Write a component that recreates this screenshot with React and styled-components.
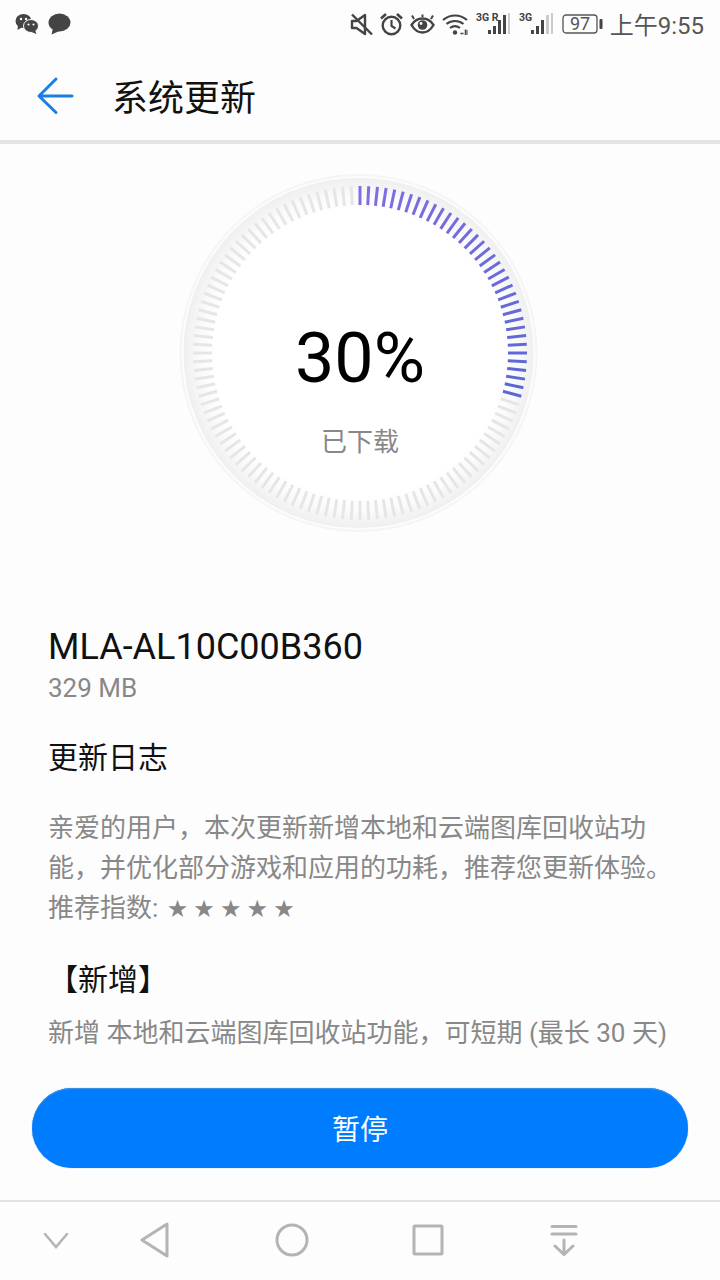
import React from 'react'
import styled, { createGlobalStyle } from 'styled-components'

const GlobalStyle = createGlobalStyle`
  html, body { margin: 0; padding: 0; background: #fdfdfd; }
  * { box-sizing: border-box; }
  body { font-family: Roboto, "Noto Sans CJK SC", sans-serif; }
`

const Page = styled.div`
  width: 720px;
  height: 1280px;
  display: flex;
  flex-direction: column;
  background: #fdfdfd;
  overflow: hidden;
`

const StatusBar = styled.div`
  height: 50px;
  flex: none;
  display: flex;
  align-items: center;
  padding: 0 16px 2px 15px;
  color: #444;
`

const StatusLeft = styled.div`
  display: flex;
  align-items: center;
  gap: 8px;
`

const StatusRight = styled.div`
  margin-left: auto;
  display: flex;
  align-items: center;
  gap: 7px;
`

const Clock = styled.span`
  font-size: 24px;
  color: #555;
  margin-top: -2px;
`

const Header = styled.header`
  height: 94px;
  flex: none;
  display: flex;
  align-items: center;
  padding-left: 36px;
  border-bottom: 4px solid #e4e4e4;
`

const HeaderTitle = styled.h1`
  margin: 0 0 0 36px;
  font-size: 36px;
  font-weight: 400;
  color: #111;
`

const Main = styled.main`
  flex: 1;
  min-height: 0;
  overflow: hidden;
  display: flex;
  flex-direction: column;
`

const RingWrap = styled.div`
  position: relative;
  width: 380px;
  height: 380px;
  margin: 19px auto 0;
  flex: none;
`

const RingCenter = styled.div`
  position: absolute;
  inset: 0;
  display: flex;
  flex-direction: column;
  align-items: center;
`

const Percent = styled.div`
  margin-top: 153px;
  font-size: 70px;
  line-height: 84px;
  color: #000;
`

const RingLabel = styled.div`
  margin-top: 25px;
  font-size: 26px;
  line-height: 34px;
  color: #888;
`

const Details = styled.section`
  margin-top: 83px;
  padding: 0 48px;
`

const Version = styled.div`
  font-size: 36px;
  line-height: 42px;
  color: #111;
`

const Size = styled.div`
  font-size: 26px;
  line-height: 32px;
  margin-top: 4px;
  color: #888;
`

const LogTitle = styled.div`
  font-size: 30px;
  line-height: 40px;
  margin-top: 34px;
  color: #111;
`

const Paragraph = styled.p`
  margin: ${p => p.$top}px 0 0;
  font-size: 26px;
  line-height: 40px;
  color: #888;
  white-space: nowrap;
`

const Stars = styled.span`
  font-family: "DejaVu Sans", sans-serif;
  font-size: 24px;
  line-height: 26px;
  letter-spacing: 5.100px;
  margin-left: 2px;
`

const SectionTitle = styled.div`
  margin-top: 32px;
  font-size: 30px;
  line-height: 40px;
  color: #111;
`

const ButtonBar = styled.div`
  height: 112px;
  flex: none;
  padding: 0 32px;
  display: flex;
  align-items: flex-start;
`

const PauseButton = styled.button`
  width: 656px;
  height: 80px;
  border: none;
  border-radius: 40px;
  background: #007dff;
  box-shadow: inset 0 1px 0 #3f8fe0, 0 0 1px #3f8fe0;
  color: #fff;
  font-family: inherit;
  font-size: 28px;
  padding: 0;
`

const NavBar = styled.nav`
  height: 80px;
  flex: none;
  display: flex;
  align-items: center;
  padding: 0 0 2px 36px;
  border-top: 2px solid #e3e3e3;
`

const NavIcon = styled.div`
  width: 40px;
  height: 40px;
  margin-left: ${p => p.$gap}px;
  display: flex;
  align-items: center;
  justify-content: center;
  color: #b4b4b4;
`

const Wechat = () => (
  <svg width="24" height="22" viewBox="0 0 24 22" fill="#444">
    <ellipse cx="8.500" cy="8" rx="8" ry="7" />
    <path d="M3 12l-.5 5 5-3z" />
    <ellipse cx="16" cy="13" rx="7.500" ry="6.500" stroke="#fdfdfd" strokeWidth="1" />
    <path d="M20 17l1.500 4-5-2z" />
    <circle cx="6" cy="6" r="1.200" fill="#fdfdfd" />
    <circle cx="11" cy="6" r="1.200" fill="#fdfdfd" />
    <circle cx="13.500" cy="11.500" r="1.100" fill="#fdfdfd" />
    <circle cx="18.500" cy="11.500" r="1.100" fill="#fdfdfd" />
  </svg>
)

const Bubble = () => (
  <svg width="24" height="22" viewBox="0 0 24 22" fill="#444">
    <ellipse cx="12.500" cy="9.500" rx="11" ry="9" />
    <path d="M6 15l-1.500 6.500 8-3.500z" />
  </svg>
)

const Mute = () => (
  <svg width="23" height="24" viewBox="0 0 23 24" fill="none" stroke="#444" strokeWidth="2.400" strokeLinejoin="round">
    <path d="M2 9h4.500L15 3v19l-8.500-6H2z" />
    <path d="M2 2.500l20 20" />
  </svg>
)

const Alarm = () => (
  <svg width="23" height="24" viewBox="0 0 23 24" fill="none" stroke="#444" strokeWidth="2.400">
    <circle cx="11.500" cy="13.500" r="8.800" />
    <path d="M11.500 8v6l4 2.500" strokeWidth="2.200" />
    <path d="M1 6.500L6 2M22 6.500L17 2" strokeWidth="2.600" />
  </svg>
)

const Eye = () => (
  <svg width="25" height="24" viewBox="0 0 25 24" fill="none" stroke="#444">
    <path d="M1.500 13C5 7.500 9 6.500 12.500 6.500S20 7.500 23.500 13C20 19 16 20.500 12.500 20.500S5 19 1.500 13z" strokeWidth="2.400" />
    <circle cx="12.500" cy="13" r="4.800" fill="#444" stroke="none" />
    <circle cx="11" cy="11.500" r="1.400" fill="#fdfdfd" stroke="none" />
    <path d="M4 7L2 3.500M21 7l2-3.500M12.500 5V2.500" strokeWidth="2" />
  </svg>
)

const Wifi = () => (
  <svg width="27" height="24" viewBox="0 0 27 24" fill="none" stroke="#444" strokeWidth="2.200">
    <path d="M1 8c7-6 17-6 24 0" />
    <path d="M4.500 12c5-4 12-4 17 0" />
    <path d="M8 16c3-2.300 7-2.300 10 0" />
    <circle cx="13" cy="20.500" r="2.200" fill="#444" stroke="none" />
    <path d="M18.500 21.500h3M23.500 17.500v5.500" strokeWidth="1.500" />
    <path d="M25 18v5" strokeWidth="1" />
  </svg>
)

const Signal = ({ roaming, strong }) => (
  <svg width="36" height="24" viewBox="0 0 36 24">
    <text x="0" y="9" fontFamily="Roboto, sans-serif" fontSize="10.500" fontWeight="700" fill="#444">{roaming ? '3G R' : '3G'}</text>
    <rect x="12" y="18" width="3" height="4" fill="#444" />
    <rect x="17" y="14" width="3" height="8" fill="#444" />
    <rect x="22" y="8" width="3" height="14" fill="#444" />
    <rect x="27" y="3" width="3" height="19" fill={strong ? '#444' : '#ccc'} />
    <rect x="32" y="1" width="2" height="21" fill="#ccc" />
  </svg>
)

const Battery = () => (
  <svg width="41" height="22" viewBox="0 0 41 22">
    <rect x="1" y="2" width="34" height="18" rx="3" fill="none" stroke="#555" strokeWidth="1.300" />
    <text x="18" y="17" textAnchor="middle" fontFamily="Roboto, sans-serif" fontSize="18" fill="#555">97</text>
    <rect x="37.500" y="6" width="3" height="10" rx="1" fill="#444" />
  </svg>
)

const BackArrow = () => (
  <svg width="40" height="40" viewBox="0 0 40 40" fill="none" stroke="#1a7fe0" strokeWidth="3" strokeLinecap="round" strokeLinejoin="round">
    <path d="M3 21h33M20 4L3 21l17 16.500" />
  </svg>
)

const Ring = () => {
  const ticks = []
  for (let i = 0; i < 120; i++) {
    const a = (i * 3 - 90) * Math.PI / 180
    const active = i < 36
    const t = i / 35
    const color = active
      ? `rgb(${Math.round(128 - 38 * t)},${Math.round(110 - 6 * t)},${Math.round(226 - 14 * t)})`
      : '#e6e6e6'
    ticks.push(
      <line
        key={i}
        x1={190 + 148 * Math.cos(a)}
        y1={190 + 148 * Math.sin(a)}
        x2={190 + 167 * Math.cos(a)}
        y2={190 + 167 * Math.sin(a)}
        stroke={color}
        strokeWidth="3"
      />
    )
  }
  return (
    <svg width="380" height="380" viewBox="0 0 380 380">
      <defs>
        <radialGradient id="band" gradientUnits="userSpaceOnUse" cx="188.500" cy="190" r="175">
          <stop offset="0.82" stopColor="#ffffff" />
          <stop offset="0.9" stopColor="#fbfbfb" />
          <stop offset="1" stopColor="#efefef" />
        </radialGradient>
      </defs>
      <circle cx="188.500" cy="190" r="178" fill="#fcfcfc" stroke="#f5f5f5" strokeWidth="2" />
      <circle cx="188.500" cy="190" r="175" fill="url(#band)" />
      {ticks}
    </svg>
  )
}

const App = () => (
  <Page>
    <GlobalStyle />
    <StatusBar>
      <StatusLeft>
        <Wechat />
        <Bubble />
      </StatusLeft>
      <StatusRight>
        <Mute />
        <Alarm />
        <Eye />
        <Wifi />
        <Signal roaming strong />
        <Signal />
        <Battery />
        <Clock>上午9:55</Clock>
      </StatusRight>
    </StatusBar>
    <Header>
      <BackArrow />
      <HeaderTitle>系统更新</HeaderTitle>
    </Header>
    <Main>
      <RingWrap>
        <Ring />
        <RingCenter>
          <Percent>30%</Percent>
          <RingLabel>已下载</RingLabel>
        </RingCenter>
      </RingWrap>
      <Details>
        <Version>MLA-AL10C00B360</Version>
        <Size>329 MB</Size>
        <LogTitle>更新日志</LogTitle>
        <Paragraph $top={30}>
          亲爱的用户，本次更新新增本地和云端图库回收站功<br />
          能，并优化部分游戏和应用的功耗，推荐您更新体验。<br />
          推荐指数: <Stars>★★★★★</Stars>
        </Paragraph>
        <SectionTitle>【新增】</SectionTitle>
        <Paragraph $top={13}>新增 本地和云端图库回收站功能，可短期 (最长 30 天)</Paragraph>
      </Details>
    </Main>
    <ButtonBar>
      <PauseButton>暂停</PauseButton>
    </ButtonBar>
    <NavBar>
      <NavIcon $gap={0}>
        <svg width="26" height="20" viewBox="0 0 26 20" fill="none" stroke="currentColor" strokeWidth="2.500" strokeLinecap="round"><path d="M2 4l11 13L24 4" /></svg>
      </NavIcon>
      <NavIcon $gap={59}>
        <svg width="30" height="36" viewBox="0 0 30 36" fill="none" stroke="currentColor" strokeWidth="3" strokeLinejoin="round"><path d="M27 2v32L2 18z" /></svg>
      </NavIcon>
      <NavIcon $gap={97}>
        <svg width="34" height="34" viewBox="0 0 34 34" fill="none" stroke="currentColor" strokeWidth="3"><circle cx="17" cy="17" r="15" /></svg>
      </NavIcon>
      <NavIcon $gap={96}>
        <svg width="32" height="32" viewBox="0 0 32 32" fill="none" stroke="currentColor" strokeWidth="3" strokeLinejoin="round"><rect x="2" y="2" width="28" height="28" rx="1" /></svg>
      </NavIcon>
      <NavIcon $gap={96}>
        <svg width="30" height="32" viewBox="0 0 30 32" fill="none" stroke="currentColor" strokeWidth="3" strokeLinecap="round"><path d="M3 2.500h24M3 10h24M15 16v14M6 22l9 8.500 9-8.500" /></svg>
      </NavIcon>
    </NavBar>
  </Page>
)

export default App
